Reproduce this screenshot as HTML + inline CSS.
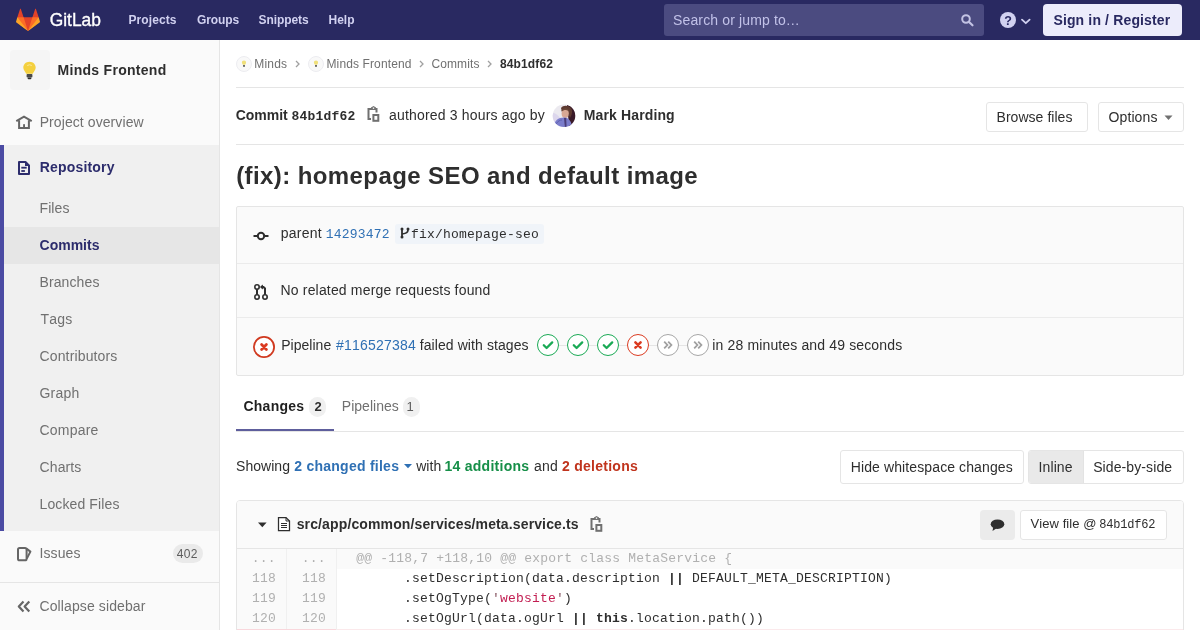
<!DOCTYPE html>
<html><head><meta charset="utf-8"><title>GitLab commit</title>
<style>
*{box-sizing:border-box;margin:0;padding:0}
html,body{width:1200px;height:630px;overflow:hidden;background:#fff}
body{font-family:"Liberation Sans",sans-serif;font-size:14px;color:#2e2e2e;position:relative}
.t{position:absolute;white-space:pre;line-height:1;font-kerning:none}
.a{position:absolute}
svg{position:absolute;overflow:visible}
#w{position:absolute;left:0;top:0;width:1200px;height:630px;will-change:transform}
</style></head><body><div id=w>
<div class=a style='left:0px;top:0px;width:1200px;height:40px;background:#292961'></div>
<svg style="left:16px;top:8px" width="24" height="24" viewBox="0 0 36 36">
<path fill="#e24329" d="M2 14l9.38 9v-9l-4-12.28c-.205-.632-1.176-.632-1.38 0z"/>
<path fill="#e24329" d="M34 14l-9.38 9v-9l4-12.28c.205-.632 1.176-.632 1.38 0z"/>
<path fill="#e24329" d="M18,34.38 3,14 33,14 Z"/>
<path fill="#fc6d26" d="M18,34.38 11.38,14 2,14 6,25Z"/>
<path fill="#fc6d26" d="M18,34.38 24.62,14 34,14 30,25Z"/>
<path fill="#fca326" d="M2 14L.1 20.16c-.18.565 0 1.2.5 1.56l17.42 12.66z"/>
<path fill="#fca326" d="M34 14l1.9 6.16c.18.565 0 1.2-.5 1.56L18 34.38z"/>
</svg>
<svg style="left:0;top:0" width="1" height="1"><text x="49.7" y="26" fill="#fff" stroke="#fff" stroke-width="0.35" font-family="Liberation Sans" font-size="19" textLength="51.3" lengthAdjust="spacingAndGlyphs">GitLab</text></svg>
<div class=t style='left:128.50px;top:14.00px;font-size:12px;color:#d1d1f0;letter-spacing:0.081px;font-weight:700'>Projects</div>
<div class=t style='left:197.00px;top:14.00px;font-size:12px;color:#d1d1f0;letter-spacing:-0.111px;font-weight:700'>Groups</div>
<div class=t style='left:258.60px;top:14.00px;font-size:12px;color:#d1d1f0;letter-spacing:-0.084px;font-weight:700'>Snippets</div>
<div class=t style='left:328.50px;top:14.00px;font-size:12px;color:#d1d1f0;letter-spacing:-0.001px;font-weight:700'>Help</div>
<div class=a style='left:664px;top:4px;width:320px;height:32px;background:#4b4b80;border-radius:3px'></div>
<div class=t style='left:673.00px;top:13.00px;font-size:14px;color:#c2c2e8;letter-spacing:0.139px'>Search or jump to…</div>
<svg style="left:960.7px;top:14.3px" width="13" height="12" viewBox="0 0 13 12"><circle cx="5" cy="5" r="3.8" fill="none" stroke="#c3c3e3" stroke-width="2"/><path d="M7.8 7.8 L11.5 11.3" stroke="#c3c3e3" stroke-width="2.2" stroke-linecap="round"/></svg>
<svg style="left:1000px;top:12px" width="16" height="16" viewBox="0 0 16 16"><circle cx="8" cy="8" r="8" fill="#d1d1f0"/><text x="8" y="12.6" text-anchor="middle" font-family="Liberation Sans" font-weight="700" font-size="12.5" fill="#292961">?</text></svg>
<svg style="left:1019.5px;top:17.5px" width="11" height="7" viewBox="0 0 11 7"><path d="M2 1.6 L5.8 5.2 L9.6 1.6" fill="none" stroke="#d1d1f0" stroke-width="1.8" stroke-linecap="round" stroke-linejoin="round"/></svg>
<div class=a style='left:1043px;top:4px;width:139px;height:32px;background:#ececfb;border-radius:4px'></div>
<div class=t style='left:1053.40px;top:13.00px;font-size:14px;color:#292961;letter-spacing:0.147px;font-weight:700'>Sign in / Register</div>
<div class=a style='left:0px;top:40px;width:219px;height:590px;background:#fafafa'></div>
<div class=a style='left:219px;top:40px;width:1px;height:590px;background:#e5e5e5'></div>
<div class=a style='left:10px;top:50px;width:40px;height:40px;background:#f5f5f5;border-radius:4px'></div>
<svg style="left:22px;top:61px" width="15" height="19" viewBox="0 0 15 19"><path d="M7.5 0.8 C3.6 0.8 1.3 3.6 1.3 6.6 C1.3 9.2 3.3 10.6 4.2 12.8 L10.8 12.8 C11.7 10.6 13.7 9.2 13.7 6.6 C13.7 3.6 11.4 0.8 7.5 0.8Z" fill="#f4d03f"/><path d="M5.2 4.5 Q7.5 3 9.8 4.5" stroke="#fbe99a" stroke-width="1" fill="none"/><rect x="4.6" y="13" width="5.8" height="3.6" rx="0.8" fill="#4a4a4a"/><rect x="5.6" y="16.4" width="3.8" height="1.8" rx="0.9" fill="#2e2e2e"/></svg>
<div class=t style='left:57.50px;top:63.00px;font-size:14px;color:#2e2e2e;letter-spacing:0.287px;font-weight:700'>Minds Frontend</div>
<svg style="left:16px;top:116px" width="16" height="13" viewBox="0 0 16 13"><path d="M0.3 5.2 L8 0.6 L15.7 5.2" fill="none" stroke="#666" stroke-width="2" stroke-linejoin="miter"/><path d="M3.1 4.2 V11.9 H12.9 V4.2" fill="none" stroke="#666" stroke-width="2"/><rect x="7.1" y="8.2" width="1.9" height="4" fill="#666"/></svg>
<div class=t style='left:39.70px;top:115.00px;font-size:14px;color:#707070;letter-spacing:0.081px'>Project overview</div>
<div class=a style='left:0px;top:145px;width:219px;height:386px;background:#f0f0f0'></div>
<div class=a style='left:0px;top:145px;width:4px;height:386px;background:#4b4ba3'></div>
<svg style="left:18px;top:161px" width="12" height="14" viewBox="0 0 12 14"><path d="M1 1 H7.5 L11 4.5 V13 H1 Z" fill="none" stroke="#2c2c6c" stroke-width="2" stroke-linejoin="round"/><rect x="3.3" y="5.8" width="5.4" height="1.8" fill="#2c2c6c"/><rect x="3.3" y="9.1" width="3.6" height="1.8" fill="#2c2c6c"/><path d="M7 1.2 L10.8 5 L7 5 Z" fill="#2c2c6c"/></svg>
<div class=t style='left:39.70px;top:160.00px;font-size:14px;color:#2c2c6c;letter-spacing:0.188px;font-weight:700'>Repository</div>
<div class=a style='left:4px;top:227px;width:215px;height:37px;background:#e6e6e6'></div>
<div class=t style='left:39.50px;top:201.00px;font-size:14px;color:#707070;letter-spacing:0.088px'>Files</div>
<div class=t style='left:39.50px;top:238.00px;font-size:14px;color:#2c2c6c;letter-spacing:0.015px;font-weight:700'>Commits</div>
<div class=t style='left:39.50px;top:275.00px;font-size:14px;color:#707070;letter-spacing:0.107px'>Branches</div>
<div class=t style='left:40.50px;top:312.00px;font-size:14px;color:#707070;letter-spacing:0.219px'>Tags</div>
<div class=t style='left:39.50px;top:349.00px;font-size:14px;color:#707070;letter-spacing:0.145px'>Contributors</div>
<div class=t style='left:39.50px;top:386.00px;font-size:14px;color:#707070;letter-spacing:0.218px'>Graph</div>
<div class=t style='left:39.50px;top:423.00px;font-size:14px;color:#707070;letter-spacing:0.203px'>Compare</div>
<div class=t style='left:39.50px;top:460.00px;font-size:14px;color:#707070;letter-spacing:0.128px'>Charts</div>
<div class=t style='left:39.50px;top:497.00px;font-size:14px;color:#707070;letter-spacing:0.117px'>Locked Files</div>
<svg style="left:16px;top:546px" width="16" height="16" viewBox="0 0 16 16"><rect x="2" y="2" width="8.6" height="12.3" rx="1.6" fill="none" stroke="#666" stroke-width="2"/><path d="M10.4 2.6 L14.4 5.6 L10.8 12.6" fill="none" stroke="#666" stroke-width="2" stroke-linejoin="round"/></svg>
<div class=t style='left:39.50px;top:546.00px;font-size:14px;color:#707070;letter-spacing:0.090px'>Issues</div>
<div class=a style='left:172.5px;top:544px;width:30.5px;height:19px;background:#eaeaea;border-radius:10px'></div>
<div class=t style='left:176.70px;top:548.00px;font-size:12px;color:#5c5c5c;letter-spacing:0.326px'>402</div>
<div class=a style='left:0px;top:582px;width:219px;height:1px;background:#e5e5e5'></div>
<svg style="left:17px;top:600px" width="14" height="13" viewBox="0 0 14 13"><path d="M6.5 1.5 L1.8 6.5 L6.5 11.5 M12.3 1.5 L7.6 6.5 L12.3 11.5" fill="none" stroke="#666" stroke-width="2.2" stroke-linejoin="round"/></svg>
<div class=t style='left:39.50px;top:599.00px;font-size:14px;color:#707070;letter-spacing:0.107px'>Collapse sidebar</div>
<svg style="left:235.5px;top:55.5px" width="16" height="16" viewBox="0 0 16 16"><circle cx="8" cy="8" r="7.5" fill="#f9f9f9" stroke="#ececf0" stroke-width="1"/><path d="M8 4.6 C6.7 4.6 5.9 5.5 5.9 6.5 C5.9 7.5 6.6 7.9 6.9 8.7 L9.1 8.7 C9.4 7.9 10.1 7.5 10.1 6.5 C10.1 5.5 9.3 4.6 8 4.6Z" fill="#f0e07a"/><rect x="7" y="9" width="2" height="1.8" fill="#6a6a6a"/></svg>
<div class=t style='left:254.30px;top:58.00px;font-size:12px;color:#707070;letter-spacing:0.198px'>Minds</div>
<svg style="left:295px;top:60px" width="5" height="8" viewBox="0 0 5 8"><path d="M1 1 L4 4 L1 7" fill="none" stroke="#a0a0a0" stroke-width="1.3"/></svg>
<svg style="left:307.5px;top:55.5px" width="16" height="16" viewBox="0 0 16 16"><circle cx="8" cy="8" r="7.5" fill="#f9f9f9" stroke="#ececf0" stroke-width="1"/><path d="M8 4.6 C6.7 4.6 5.9 5.5 5.9 6.5 C5.9 7.5 6.6 7.9 6.9 8.7 L9.1 8.7 C9.4 7.9 10.1 7.5 10.1 6.5 C10.1 5.5 9.3 4.6 8 4.6Z" fill="#f0e07a"/><rect x="7" y="9" width="2" height="1.8" fill="#6a6a6a"/></svg>
<div class=t style='left:326.50px;top:58.00px;font-size:12px;color:#707070;letter-spacing:0.116px'>Minds Frontend</div>
<svg style="left:419px;top:60px" width="5" height="8" viewBox="0 0 5 8"><path d="M1 1 L4 4 L1 7" fill="none" stroke="#a0a0a0" stroke-width="1.3"/></svg>
<div class=t style='left:431.50px;top:58.00px;font-size:12px;color:#707070;letter-spacing:0.095px'>Commits</div>
<svg style="left:487px;top:60px" width="5" height="8" viewBox="0 0 5 8"><path d="M1 1 L4 4 L1 7" fill="none" stroke="#a0a0a0" stroke-width="1.3"/></svg>
<div class=t style='left:500.00px;top:58.00px;font-size:12px;color:#2e2e2e;letter-spacing:0.122px;font-weight:700'>84b1df62</div>
<div class=a style='left:236px;top:87px;width:948px;height:1px;background:#e5e5e5'></div>
<div class=t style='left:235.70px;top:108.00px;font-size:14px;color:#2e2e2e;letter-spacing:-0.018px;font-weight:700'>Commit</div>
<div class=t style='left:291.50px;top:110.00px;font-size:13px;color:#2e2e2e;letter-spacing:0.199px;font-weight:700;font-family:"Liberation Mono",monospace'>84b1df62</div>
<svg style="left:366.5px;top:106px" width="13" height="16" viewBox="0 0 13 16"><path d="M4 13 H1.5 V2.9 H9.5 V6.4" fill="none" stroke="#707070" stroke-width="2"/><path d="M4 3.6 L4 1.6 L6.5 0.1 L9 1.6 L9 3.6 Z" fill="#707070"/><rect x="5.8" y="1.5" width="1.4" height="1.3" fill="#fff"/><rect x="6.4" y="9" width="4.9" height="5.8" fill="none" stroke="#707070" stroke-width="2"/></svg>
<div class=t style='left:389.00px;top:108.00px;font-size:14px;color:#2e2e2e;letter-spacing:0.184px'>authored 3 hours ago by</div>
<svg style="left:552px;top:104px" width="24" height="24" viewBox="0 0 24 24"><defs><clipPath id="av"><circle cx="12" cy="11.8" r="11.3"/></clipPath></defs><g clip-path="url(#av)"><rect width="24" height="24" fill="#ebe9ef"/><path d="M0 9 C4 9 6 11 8 14 L0 24 Z" fill="#dcd6ec"/><path d="M15 1 C20 2 24 6 24 12 L24 24 L17 24 L16 10 Z" fill="#3a1a28"/><path d="M9 4 C11 1 16 1 19 4 C21 7 20 11 18 14 L16 9 L10 8 Z" fill="#5e3a30"/><ellipse cx="13.2" cy="9.6" rx="3.6" ry="4.4" fill="#d8a894"/><path d="M9.5 6.5 C11 3.6 15 3.4 17 6 L16.5 7 C14.5 5.6 11.5 5.8 9.8 7.6 Z" fill="#6b4636"/><path d="M1 24 C2 17 6 13.5 12 13.5 C16 13.5 19 15.5 20.5 24 Z" fill="#7b7dcb"/><path d="M12 14 L13 24 L14.6 24 L14.2 14 Z" fill="#4a3d78"/><path d="M4 20 C6 17 8 16 10 16" stroke="#5f61b0" stroke-width="1" fill="none"/></g></svg>
<div class=t style='left:583.80px;top:108.00px;font-size:14px;color:#2e2e2e;letter-spacing:0.128px;font-weight:700'>Mark Harding</div>
<div class=a style='left:986px;top:102px;width:102px;height:30px;background:#fff;border:1px solid #e5e5e5;border-radius:3px'></div>
<div class=t style='left:996.50px;top:110.00px;font-size:14px;color:#2e2e2e;letter-spacing:0.044px'>Browse files</div>
<div class=a style='left:1098px;top:102px;width:86px;height:30px;background:#fff;border:1px solid #e5e5e5;border-radius:3px'></div>
<div class=t style='left:1108.50px;top:110.00px;font-size:14px;color:#2e2e2e;letter-spacing:0.107px'>Options</div>
<svg style="left:1164px;top:115px" width="9" height="6" viewBox="0 0 9 6"><path d="M0.5 0.5 H8.5 L4.5 5 Z" fill="#707070"/></svg>
<div class=a style='left:236px;top:144px;width:948px;height:1px;background:#e5e5e5'></div>
<div class=t style='left:236.20px;top:164.00px;font-size:24px;color:#2e2e2e;letter-spacing:0.410px;font-weight:700'>(fix): homepage SEO and default image</div>
<div class=a style='left:236px;top:206px;width:948px;height:170px;background:#fafafa;border:1px solid #e5e5e5;border-radius:2px'></div>
<div class=a style='left:237px;top:263px;width:946px;height:1px;background:#ebebeb'></div>
<div class=a style='left:237px;top:317px;width:946px;height:1px;background:#ebebeb'></div>
<svg style="left:253px;top:228px" width="16" height="16" viewBox="0 0 16 16"><path d="M0.5 8 H4.5 M11.5 8 H15.5" stroke="#2e2e2e" stroke-width="2"/><circle cx="8" cy="8" r="3.2" fill="none" stroke="#2e2e2e" stroke-width="2"/></svg>
<div class=t style='left:280.75px;top:226.00px;font-size:14px;color:#2e2e2e;letter-spacing:0.217px'>parent</div>
<div class=t style='left:325.80px;top:228.00px;font-size:13px;color:#2f70b4;letter-spacing:0.199px;font-family:"Liberation Mono",monospace'>14293472</div>
<div class=a style='left:395px;top:224px;width:149px;height:20px;background:#f0f4f9;border-radius:3px'></div>
<svg style="left:400px;top:227px" width="10" height="12" viewBox="0 0 10 12"><path d="M2 2 V10" stroke="#2e2e2e" stroke-width="1.8"/><circle cx="2" cy="2" r="1.5" fill="#2e2e2e"/><circle cx="2" cy="10" r="1.5" fill="#2e2e2e"/><circle cx="8" cy="2" r="1.5" fill="#2e2e2e"/><path d="M8 2.5 C8 5.6 6.5 6.2 2 7" fill="none" stroke="#2e2e2e" stroke-width="1.7"/></svg>
<div class=t style='left:411.00px;top:228.00px;font-size:13px;color:#2e2e2e;letter-spacing:0.199px;font-family:"Liberation Mono",monospace'>fix/homepage-seo</div>
<svg style="left:253px;top:283px" width="16" height="18" viewBox="0 0 16 18"><circle cx="4" cy="4" r="2.2" fill="none" stroke="#2e2e2e" stroke-width="1.6"/><circle cx="4" cy="14" r="2.2" fill="none" stroke="#2e2e2e" stroke-width="1.6"/><circle cx="12" cy="14" r="2.2" fill="none" stroke="#2e2e2e" stroke-width="1.6"/><path d="M4 6.2 V11.8" stroke="#2e2e2e" stroke-width="2"/><path d="M12 11.8 V5.5 L10.5 4 H8" fill="none" stroke="#2e2e2e" stroke-width="2"/><path d="M9.5 2.2 L7.5 4 L9.5 5.8 Z" fill="#2e2e2e" stroke="#2e2e2e" stroke-width="1"/></svg>
<div class=t style='left:280.50px;top:283.00px;font-size:14px;color:#2e2e2e;letter-spacing:0.172px'>No related merge requests found</div>
<svg style="left:253px;top:336px" width="22" height="22" viewBox="0 0 22 22"><circle cx="11" cy="11" r="10.1" fill="#fff" stroke="#d0391f" stroke-width="1.8"/><path d="M8.6 8.6 L13.4 13.4 M13.4 8.6 L8.6 13.4" stroke="#db3b21" stroke-width="2.8" stroke-linecap="round"/></svg>
<div class=t style='left:281.20px;top:338.00px;font-size:14px;color:#2e2e2e;letter-spacing:0.023px'>Pipeline</div>
<div class=t style='left:336.00px;top:338.00px;font-size:14px;color:#2f70b4;letter-spacing:0.214px'>#116527384</div>
<div class=t style='left:419.70px;top:338.00px;font-size:14px;color:#2e2e2e;letter-spacing:0.089px'>failed with stages</div>
<div class=a style='left:559px;top:345px;width:8px;height:1px;background:#e5e5e5'></div>
<div class=a style='left:589px;top:345px;width:8px;height:1px;background:#e5e5e5'></div>
<div class=a style='left:619px;top:345px;width:8px;height:1px;background:#e5e5e5'></div>
<div class=a style='left:649px;top:345px;width:8px;height:1px;background:#e5e5e5'></div>
<div class=a style='left:679px;top:345px;width:8px;height:1px;background:#e5e5e5'></div>
<svg style="left:537px;top:334px" width="22" height="22" viewBox="0 0 22 22"><circle cx="11" cy="11" r="10.5" fill="#fff" stroke="#1aaa55" stroke-width="1"/><path d="M6.8 11.2 L9.6 14 L15.2 8.4" fill="none" stroke="#1aaa55" stroke-width="2.3" stroke-linecap="round" stroke-linejoin="round"/></svg>
<svg style="left:567px;top:334px" width="22" height="22" viewBox="0 0 22 22"><circle cx="11" cy="11" r="10.5" fill="#fff" stroke="#1aaa55" stroke-width="1"/><path d="M6.8 11.2 L9.6 14 L15.2 8.4" fill="none" stroke="#1aaa55" stroke-width="2.3" stroke-linecap="round" stroke-linejoin="round"/></svg>
<svg style="left:597px;top:334px" width="22" height="22" viewBox="0 0 22 22"><circle cx="11" cy="11" r="10.5" fill="#fff" stroke="#1aaa55" stroke-width="1"/><path d="M6.8 11.2 L9.6 14 L15.2 8.4" fill="none" stroke="#1aaa55" stroke-width="2.3" stroke-linecap="round" stroke-linejoin="round"/></svg>
<svg style="left:627px;top:334px" width="22" height="22" viewBox="0 0 22 22"><circle cx="11" cy="11" r="10.5" fill="#fff" stroke="#db3b21" stroke-width="1"/><path d="M8.4 8.4 L13.6 13.6 M13.6 8.4 L8.4 13.6" stroke="#db3b21" stroke-width="2.6" stroke-linecap="round"/></svg>
<svg style="left:657px;top:334px" width="22" height="22" viewBox="0 0 22 22"><circle cx="11" cy="11" r="10.5" fill="#fff" stroke="#a7a7a7" stroke-width="1"/><path d="M7.2 7.6 L10.4 11 L7.2 14.4 M11.2 7.6 L14.4 11 L11.2 14.4" fill="none" stroke="#a0a0a0" stroke-width="1.8" stroke-linejoin="miter"/></svg>
<svg style="left:687px;top:334px" width="22" height="22" viewBox="0 0 22 22"><circle cx="11" cy="11" r="10.5" fill="#fff" stroke="#a7a7a7" stroke-width="1"/><path d="M7.2 7.6 L10.4 11 L7.2 14.4 M11.2 7.6 L14.4 11 L11.2 14.4" fill="none" stroke="#a0a0a0" stroke-width="1.8" stroke-linejoin="miter"/></svg>
<div class=t style='left:712.30px;top:338.00px;font-size:14px;color:#2e2e2e;letter-spacing:0.142px'>in 28 minutes and 49 seconds</div>
<div class=t style='left:243.40px;top:399.00px;font-size:14px;color:#1f1f1f;letter-spacing:0.268px;font-weight:700'>Changes</div>
<div class=a style='left:308.5px;top:397px;width:17.5px;height:20px;background:#f0f0f0;border-radius:9px'></div>
<div class=t style='left:314.60px;top:400.00px;font-size:13px;color:#2e2e2e;letter-spacing:-0.230px;font-weight:700'>2</div>
<div class=t style='left:341.80px;top:399.00px;font-size:14px;color:#707070;letter-spacing:0.021px'>Pipelines</div>
<div class=a style='left:402.5px;top:397px;width:17.5px;height:20px;background:#f0f0f0;border-radius:9px'></div>
<div class=t style='left:406.50px;top:400.00px;font-size:13px;color:#5c5c5c;letter-spacing:-0.230px'>1</div>
<div class=a style='left:236px;top:431px;width:948px;height:1px;background:#e5e5e5'></div>
<div class=a style='left:236px;top:429px;width:98px;height:2px;background:#5e5e9c'></div>
<div class=t style='left:236.00px;top:459.00px;font-size:14px;color:#2e2e2e;letter-spacing:0.042px'>Showing</div>
<div class=t style='left:294.20px;top:459.00px;font-size:14px;color:#2f70b4;letter-spacing:0.257px;font-weight:700'>2 changed files</div>
<svg style="left:404px;top:464.3px" width="8" height="5" viewBox="0 0 8 5"><path d="M0 0 H8 L4 4.3 Z" fill="#2f70b4"/></svg>
<div class=t style='left:416.20px;top:459.00px;font-size:14px;color:#2e2e2e;letter-spacing:0.026px'>with</div>
<div class=t style='left:444.40px;top:459.00px;font-size:14px;color:#168f48;letter-spacing:0.276px;font-weight:700'>14 additions</div>
<div class=t style='left:534.00px;top:459.00px;font-size:14px;color:#2e2e2e;letter-spacing:0.214px'>and</div>
<div class=t style='left:562.00px;top:459.00px;font-size:14px;color:#c0341d;letter-spacing:0.261px;font-weight:700'>2 deletions</div>
<div class=a style='left:840px;top:450px;width:184px;height:34px;background:#fff;border:1px solid #e5e5e5;border-radius:3px'></div>
<div class=t style='left:850.80px;top:460.00px;font-size:14px;color:#2e2e2e;letter-spacing:0.107px'>Hide whitespace changes</div>
<div class=a style='left:1028px;top:450px;width:156px;height:34px;background:#fff;border:1px solid #e5e5e5;border-radius:3px'></div>
<div class=a style='left:1029px;top:451px;width:54px;height:32px;background:#e9e9e9;border-radius:2px 0 0 2px'></div>
<div class=a style='left:1083px;top:451px;width:1px;height:32px;background:#e3e3e3'></div>
<div class=t style='left:1038.60px;top:460.00px;font-size:14px;color:#2e2e2e;letter-spacing:0.089px'>Inline</div>
<div class=t style='left:1093.20px;top:460.00px;font-size:14px;color:#2e2e2e;letter-spacing:0.099px'>Side-by-side</div>
<div class=a style='left:236px;top:500px;width:948px;height:140px;background:#fff;border:1px solid #e5e5e5;border-radius:4px 4px 0 0'></div>
<div class=a style='left:237px;top:501px;width:946px;height:47px;background:#fafafa;border-radius:3px 3px 0 0'></div>
<div class=a style='left:237px;top:548px;width:946px;height:1px;background:#e5e5e5'></div>
<svg style="left:258px;top:521.5px" width="9" height="6" viewBox="0 0 9 6"><path d="M0 0.5 H8.6 L4.3 5.2 Z" fill="#2e2e2e"/></svg>
<svg style="left:277px;top:516px" width="14" height="16" viewBox="0 0 14 16"><path d="M1.5 1.5 H9 L12.5 5 V14.5 H1.5 Z" fill="#fff" stroke="#2e2e2e" stroke-width="1.25" stroke-linejoin="miter"/><path d="M9 1.5 V5 H12.5" fill="none" stroke="#2e2e2e" stroke-width="1"/><path d="M4 7.5 H10 M4 9.5 H10 M4 11.5 H10" stroke="#2e2e2e" stroke-width="1"/></svg>
<div class=t style='left:296.70px;top:517.00px;font-size:14px;color:#2e2e2e;letter-spacing:0.127px;font-weight:700'>src/app/common/services/meta.service.ts</div>
<svg style="left:589.5px;top:516px" width="13" height="16" viewBox="0 0 13 16"><path d="M4 13 H1.5 V2.9 H9.5 V6.4" fill="none" stroke="#707070" stroke-width="2"/><path d="M4 3.6 L4 1.6 L6.5 0.1 L9 1.6 L9 3.6 Z" fill="#707070"/><rect x="5.8" y="1.5" width="1.4" height="1.3" fill="#fff"/><rect x="6.4" y="9" width="4.9" height="5.8" fill="none" stroke="#707070" stroke-width="2"/></svg>
<div class=a style='left:980px;top:510px;width:35px;height:30px;background:#ebebeb;border-radius:4px'></div>
<svg style="left:990px;top:519px" width="15" height="13" viewBox="0 0 15 13"><ellipse cx="7.5" cy="5.2" rx="6.8" ry="4.8" fill="#2e2e2e"/><path d="M3.2 8 L2.5 12 L7 9" fill="#2e2e2e"/></svg>
<div class=a style='left:1019.5px;top:510px;width:147.0px;height:30px;background:#fff;border:1px solid #e5e5e5;border-radius:3px'></div>
<div class=t style='left:1030.50px;top:517.00px;font-size:13px;color:#2e2e2e;letter-spacing:0.071px'>View file @</div>
<div class=t style='left:1099.30px;top:519.00px;font-size:12px;color:#2e2e2e;letter-spacing:-0.201px;font-family:"Liberation Mono",monospace'>84b1df62</div>
<div class=a style='left:237px;top:549px;width:99px;height:81px;background:#fafafa'></div>
<div class=a style='left:286px;top:549px;width:1px;height:81px;background:#f0f0f0'></div>
<div class=a style='left:336px;top:549px;width:1px;height:81px;background:#f0f0f0'></div>
<div class=a style='left:337px;top:549px;width:846px;height:20px;background:#fafafa'></div>
<div class=t style='left:251.80px;top:552.00px;font-size:13px;color:#b0b0b0;letter-spacing:0.199px;font-family:"Liberation Mono",monospace'>...</div>
<div class=t style='left:301.80px;top:552.00px;font-size:13px;color:#b0b0b0;letter-spacing:0.199px;font-family:"Liberation Mono",monospace'>...</div>
<div class=t style='left:356.25px;top:552.00px;font-size:13px;color:#b0b0b0;letter-spacing:0.199px;font-family:"Liberation Mono",monospace'>@@ -118,7 +118,10 @@ export class MetaService {</div>
<div class=t style='left:252.10px;top:572.00px;font-size:13px;color:#b0b0b0;letter-spacing:0.199px;font-family:"Liberation Mono",monospace'>118</div>
<div class=t style='left:302.10px;top:572.00px;font-size:13px;color:#b0b0b0;letter-spacing:0.199px;font-family:"Liberation Mono",monospace'>118</div>
<div class=t style='left:252.10px;top:592.00px;font-size:13px;color:#b0b0b0;letter-spacing:0.199px;font-family:"Liberation Mono",monospace'>119</div>
<div class=t style='left:302.10px;top:592.00px;font-size:13px;color:#b0b0b0;letter-spacing:0.199px;font-family:"Liberation Mono",monospace'>119</div>
<div class=t style='left:252.10px;top:612.00px;font-size:13px;color:#b0b0b0;letter-spacing:0.199px;font-family:"Liberation Mono",monospace'>120</div>
<div class=t style='left:302.10px;top:612.00px;font-size:13px;color:#b0b0b0;letter-spacing:0.199px;font-family:"Liberation Mono",monospace'>120</div>
<div class=t style='left:356.00px;top:572.00px;font-size:13px;color:#2e2e2e;letter-spacing:0.199px;font-family:"Liberation Mono",monospace'>      .setDescription(data.description </div>
<div class=t style='left:668.00px;top:572.00px;font-size:13px;color:#2e2e2e;letter-spacing:0.199px;font-weight:700;font-family:"Liberation Mono",monospace'>||</div>
<div class=t style='left:684.00px;top:572.00px;font-size:13px;color:#2e2e2e;letter-spacing:0.199px;font-family:"Liberation Mono",monospace'> DEFAULT_META_DESCRIPTION)</div>
<div class=t style='left:356.00px;top:592.00px;font-size:13px;color:#2e2e2e;letter-spacing:0.199px;font-family:"Liberation Mono",monospace'>      .setOgType(</div>
<div class=t style='left:492.00px;top:592.00px;font-size:13px;color:#8a5a66;letter-spacing:0.199px;font-family:"Liberation Mono",monospace'>&#x27;</div>
<div class=t style='left:500.00px;top:592.00px;font-size:13px;color:#c21d51;letter-spacing:0.199px;font-family:"Liberation Mono",monospace'>website</div>
<div class=t style='left:556.00px;top:592.00px;font-size:13px;color:#8a5a66;letter-spacing:0.199px;font-family:"Liberation Mono",monospace'>&#x27;</div>
<div class=t style='left:564.00px;top:592.00px;font-size:13px;color:#2e2e2e;letter-spacing:0.199px;font-family:"Liberation Mono",monospace'>)</div>
<div class=t style='left:356.00px;top:612.00px;font-size:13px;color:#2e2e2e;letter-spacing:0.199px;font-family:"Liberation Mono",monospace'>      .setOgUrl(data.ogUrl </div>
<div class=t style='left:572.00px;top:612.00px;font-size:13px;color:#2e2e2e;letter-spacing:0.199px;font-weight:700;font-family:"Liberation Mono",monospace'>||</div>
<div class=t style='left:588.00px;top:612.00px;font-size:13px;color:#2e2e2e;letter-spacing:0.199px;font-family:"Liberation Mono",monospace'> </div>
<div class=t style='left:596.00px;top:612.00px;font-size:13px;color:#2e2e2e;letter-spacing:0.199px;font-weight:700;font-family:"Liberation Mono",monospace'>this</div>
<div class=t style='left:628.00px;top:612.00px;font-size:13px;color:#2e2e2e;letter-spacing:0.199px;font-family:"Liberation Mono",monospace'>.location.path())</div>
<div class=a style='left:237px;top:629px;width:99px;height:1px;background:#f9d7dc'></div>
<div class=a style='left:337px;top:629px;width:846px;height:1px;background:#fbe9eb'></div>
</div></body></html>
